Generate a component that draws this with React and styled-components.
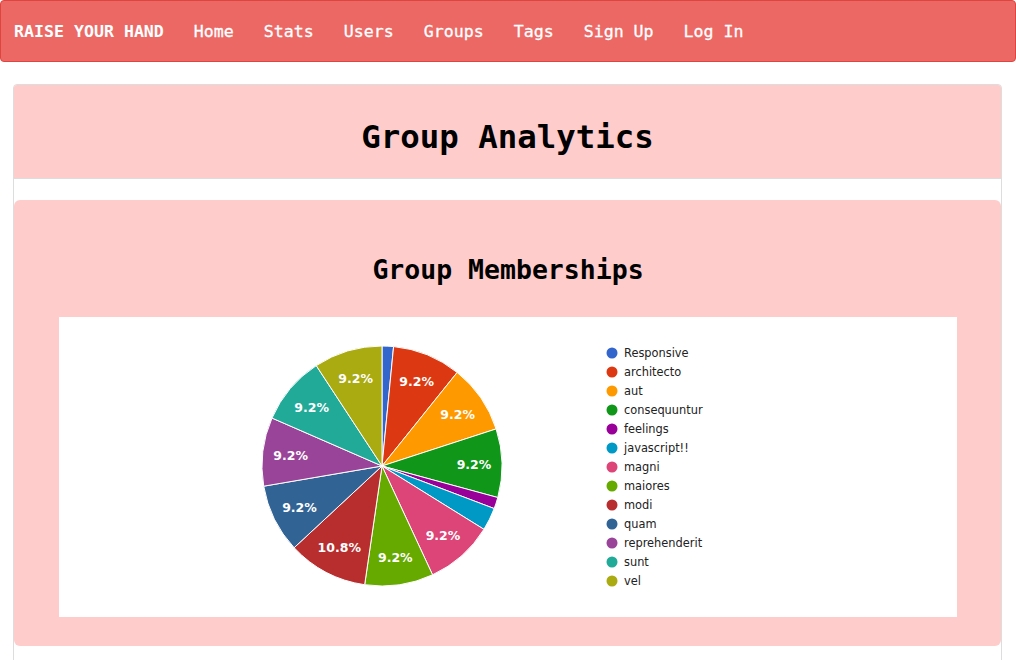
import React from "react";
import styled, { createGlobalStyle } from "styled-components";

const GlobalStyle = createGlobalStyle`
  html, body { margin: 0; padding: 0; background: #fff; }
  body { font-family: "DejaVu Sans Mono", "Liberation Mono", monospace; overflow: hidden; }
`;

const Navbar = styled.nav`
  display: flex;
  align-items: center;
  height: 60px;
  background: #ec6865;
  border: 1px solid #e0443f;
  border-radius: 4px;
  font-family: "DejaVu Sans Mono", monospace;
  font-size: 16.6px;
  color: #fff;
`;

const Brand = styled.a`
  font-weight: bold;
  padding: 0 15px 0 13px;
  color: #fff;
  text-decoration: none;
`;

const NavLink = styled.a`
  padding: 0 15px;
  color: #fff;
  text-decoration: none;
  -webkit-text-stroke: 0.3px #fff;
`;

const Panel = styled.section`
  margin: 22px 14px 0 13px;
  border: 1px solid #dddddd;
  border-radius: 4px;
  height: 620px;
  overflow: hidden;
`;

const PanelHeading = styled.header`
  background: #ffcccc;
  border-bottom: 1px solid #dddddd;
  height: 94px;
  box-sizing: border-box;
  padding-top: 10px;
  display: flex;
  align-items: center;
  justify-content: center;
`;

const Title = styled.h1`
  margin: 0;
  font-family: "DejaVu Sans Mono", monospace;
  font-size: 32.4px;
  font-weight: bold;
  color: #000;
`;

const PanelBody = styled.div`
  padding-top: 21px;
`;

const Jumbo = styled.div`
  background: #ffcccc;
  border-radius: 6px;
  padding: 44px 44px 29px 45px;
  display: flex;
  flex-direction: column;
  align-items: center;
`;

const SubTitle = styled.h2`
  margin: 0 0 30px;
  height: 43px;
  line-height: 52px;
  font-family: "DejaVu Sans Mono", monospace;
  font-size: 26.5px;
  font-weight: bold;
  color: #000;
`;

const ChartBox = styled.div`
  width: 898px;
  height: 300px;
  background: #fff;
  align-self: flex-start;
`;

const colors = [
  "#3366cc", "#dc3912", "#ff9900", "#109618", "#990099", "#0099c6",
  "#dd4477", "#66aa00", "#b82e2e", "#316395", "#994499", "#22aa99", "#aaaa11",
];

const data = [
  ["Responsive", 1], ["architecto", 6], ["aut", 6], ["consequuntur", 6],
  ["feelings", 1], ["javascript!!", 2], ["magni", 6], ["maiores", 6],
  ["modi", 7], ["quam", 6], ["reprehenderit", 6], ["sunt", 6], ["vel", 6],
];

function PieChart() {
  const cx = 323, cy = 149, r = 120;
  const total = data.reduce((s, d) => s + d[1], 0);
  let acc = 0;
  const pt = (a, d) => [cx + Math.sin(a) * d, cy - Math.cos(a) * d];
  const slices = data.map(([name, v], i) => {
    const a0 = (acc / total) * Math.PI * 2;
    acc += v;
    const a1 = (acc / total) * Math.PI * 2;
    const [x0, y0] = pt(a0, r);
    const [x1, y1] = pt(a1, r);
    const large = a1 - a0 > Math.PI ? 1 : 0;
    const d = `M${cx},${cy} L${x0},${y0} A${r},${r} 0 ${large} 1 ${x1},${y1} Z`;
    const pct = (v / total) * 100;
    const [lx, ly] = pt((a0 + a1) / 2, 92);
    return { d, color: colors[i], pct, lx, ly, name };
  });
  return (
    <svg width="898" height="300" viewBox="0 0 898 300">
      {slices.map((s, i) => (
        <path key={i} d={s.d} fill={s.color} stroke="#fff" strokeWidth="1" />
      ))}
      {slices.map((s, i) =>
        s.pct > 5 ? (
          <text
            key={"t" + i}
            x={s.lx}
            y={s.ly + 0.5}
            fill="#fff"
            fontFamily="DejaVu Sans, Verdana, sans-serif"
            fontSize="12.5"
            fontWeight="bold"
            textAnchor="middle"
            dominantBaseline="central"
          >
            {s.pct.toFixed(1)}%
          </text>
        ) : null
      )}
      {slices.map((s, i) => (
        <g key={"l" + i}>
          <circle cx="553" cy={36 + i * 19} r="5.5" fill={s.color} />
          <text
            x="565"
            y={36 + i * 19}
            fill="#222"
            fontFamily="DejaVu Sans, Verdana, sans-serif"
            fontSize="11.4"
            dominantBaseline="central"
          >
            {s.name}
          </text>
        </g>
      ))}
    </svg>
  );
}

export default function App() {
  const links = ["Home", "Stats", "Users", "Groups", "Tags", "Sign Up", "Log In"];
  return (
    <>
      <GlobalStyle />
      <Navbar>
        <Brand href="#">RAISE YOUR HAND</Brand>
        {links.map((l) => (
          <NavLink key={l} href="#">{l}</NavLink>
        ))}
      </Navbar>
      <Panel>
        <PanelHeading>
          <Title>Group Analytics</Title>
        </PanelHeading>
        <PanelBody>
          <Jumbo>
            <SubTitle>Group Memberships</SubTitle>
            <ChartBox>
              <PieChart />
            </ChartBox>
          </Jumbo>
        </PanelBody>
      </Panel>
    </>
  );
}
